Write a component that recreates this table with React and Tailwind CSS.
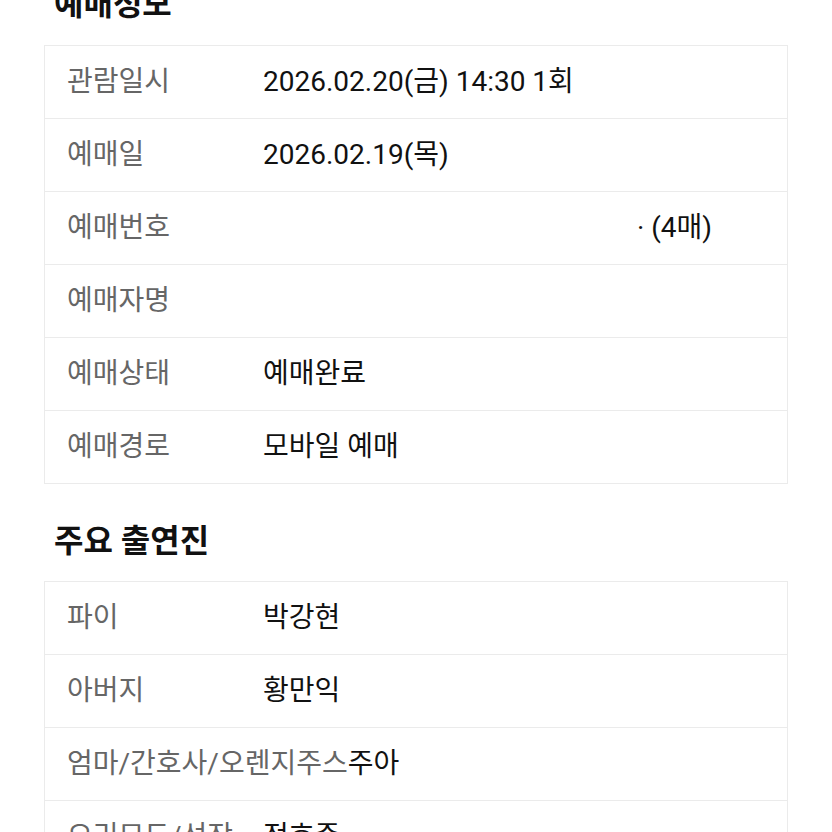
export default function App() {
  const font = { fontFamily: "Roboto, 'Noto Sans CJK KR', sans-serif" };
  const rows1 = [
    ["관람일시", "2026.02.20(금) 14:30 1회"],
    ["예매일", "2026.02.19(목)"],
    ["예매번호", <span className="pl-[374px]">· (4매)</span>],
    ["예매자명", ""],
    ["예매상태", "예매완료"],
    ["예매경로", "모바일 예매"],
  ];
  const rows2 = [
    ["파이", "박강현"],
    ["아버지", "황만익"],
    ["엄마/간호사/오렌지주스", "주아"],
    ["오리모두/선장", "정호준"],
  ];
  const Table = ({ rows }) => (
    <div className="border border-[#ebebeb] bg-white">
      {rows.map(([l, v], i) => (
        <div
          key={i}
          className={
            "flex items-center h-[72px] pl-[22px] text-[28px] " +
            (i > 0 ? "border-t border-[#ebebeb] h-[73px]" : "")
          }
        >
          <div className="min-w-[196px] shrink-0 text-[#666666] whitespace-nowrap">{l}</div>
          <div className="text-[#111111] whitespace-nowrap">{v}</div>
        </div>
      ))}
    </div>
  );
  return (
    <div className="w-[832px] h-[832px] overflow-hidden bg-white" style={font}>
      <div className="px-[44px]">
        <h2 className="mt-[-18px] mb-[18px] pl-[10px] h-[45px] leading-[45px] text-[32px] font-bold text-[#111111]">
          예매정보
        </h2>
        <Table rows={rows1} />
        <h2 className="mt-[37px] mb-[20px] pl-[10px] h-[40px] leading-[40px] text-[32px] font-bold text-[#111111]">
          주요 출연진
        </h2>
        <Table rows={rows2} />
      </div>
    </div>
  );
}
